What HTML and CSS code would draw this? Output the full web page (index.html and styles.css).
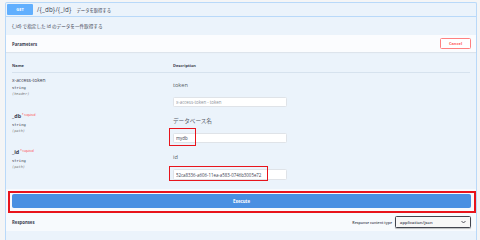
FILE: index.html
```html
<!DOCTYPE html>
<html lang="ja">
<head>
    <meta charset="UTF-8">
    <title>GET /{_db}/{_id}</title>
    <link rel="stylesheet" href="styles.css">
</head>
<body>
    <div class="opblock">
        <div class="opblock-summary">
            <span class="method">GET</span>
            <span class="path">/{_db}/{_id}</span>
            <span class="summary">データを取得する</span>
        </div>

        <div class="opblock-description">{_id} で指定した id のデータを一件取得する</div>

        <div class="section-header">
            <span class="section-title">Parameters</span>
            <button class="btn-cancel">Cancel</button>
        </div>

        <div class="params">
            <div class="param-row param-head">
                <div class="col-name">Name</div>
                <div class="col-desc">Description</div>
            </div>

            <div class="param-row">
                <div class="col-name">
                    <div class="param-name">x-access-token</div>
                    <div class="param-type">string</div>
                    <div class="param-in">(header)</div>
                </div>
                <div class="col-desc">
                    <div class="param-label">token</div>
                    <div class="field">
                        <input class="param-input" type="text" placeholder="x-access-token - token">
                    </div>
                </div>
            </div>

            <div class="param-row">
                <div class="col-name">
                    <div class="param-name is-required">_db<span class="required">* required</span></div>
                    <div class="param-type">string</div>
                    <div class="param-in">(path)</div>
                </div>
                <div class="col-desc">
                    <div class="param-label">データベース名</div>
                    <div class="field">
                        <input class="param-input" type="text" value="mydb">
                        <span class="mark mark-db"></span>
                    </div>
                </div>
            </div>

            <div class="param-row param-last">
                <div class="col-name">
                    <div class="param-name is-required">_id<span class="required">* required</span></div>
                    <div class="param-type">string</div>
                    <div class="param-in">(path)</div>
                </div>
                <div class="col-desc">
                    <div class="param-label">id</div>
                    <div class="field">
                        <input class="param-input" type="text" value="52ca8336-a606-11ea-a583-0746b3005e72">
                        <span class="mark mark-id"></span>
                    </div>
                </div>
            </div>
        </div>

        <div class="execute-wrapper">
            <div class="execute-mark">
                <button class="btn-execute">Execute</button>
            </div>
        </div>

        <div class="section-header responses-header">
            <span class="section-title">Responses</span>
            <div class="content-type">
                <span class="content-type-label">Response content type</span>
                <div class="select">
                    <span>application/json</span>
                    <svg width="5" height="4" viewBox="0 0 10 6"><path d="M1 1l4 4 4-4" fill="none" stroke="#41444e" stroke-width="1.8"/></svg>
                </div>
            </div>
        </div>
    </div>
</body>
</html>
```

FILE: styles.css
```css
* {
    margin: 0;
    padding: 0;
    box-sizing: border-box;
}

body {
    font-family: 'Open Sans', 'Noto Sans CJK JP', sans-serif;
    background-color: #f4f5f6;
    color: #3b4151;
    padding: 2px 3px 0 5px;
    height: 240px;
    overflow: hidden;
}

.opblock {
    background-color: #ebf3fb;
    border: 1px solid #b9d9f9;
    border-bottom: none;
    border-radius: 2px 2px 0 0;
    height: 238px;
}

.opblock-summary {
    display: flex;
    align-items: center;
    height: 14px;
    padding: 0 1px;
    border-bottom: 1px solid #b9d9f9;
}

.method {
    width: 26px;
    height: 11px;
    line-height: 11px;
    background-color: #61affe;
    color: #fff;
    font-size: 4px;
    font-weight: 700;
    text-align: center;
    border-radius: 1px;
}

.path {
    margin-left: 4px;
    font-size: 6.2px;
    font-weight: 500;
    letter-spacing: 0.2px;
    color: #3b4151;
}

.summary {
    margin-left: 5px;
    font-size: 4.3px;
    color: #3b4151;
}

.opblock-description {
    height: 18px;
    line-height: 18px;
    padding-left: 6px;
    font-size: 4.6px;
}

.section-header {
    display: flex;
    align-items: center;
    justify-content: space-between;
    height: 17px;
    padding: 0 5px 0 6px;
    background-color: #fbfcfe;
    box-shadow: 0 1px 1px rgba(0, 0, 0, 0.06);
}

.section-title {
    font-size: 4.3px;
    font-weight: 700;
}

.btn-cancel {
    width: 31px;
    height: 11px;
    font-family: inherit;
    font-size: 4px;
    font-weight: 700;
    color: #ff6060;
    background: #fff;
    border: 1px solid #ff8080;
    border-radius: 1.5px;
}

.params {
    padding: 0 6px;
}

.param-row {
    display: grid;
    grid-template-columns: 161px 1fr;
    padding-bottom: 2px;
}

.param-head {
    padding-top: 10px;
    border-bottom: 1px solid #d6e2ee;
    font-size: 4px;
    font-weight: 700;
    line-height: 8px;
}

.param-row .col-name {
    padding-top: 3px;
}

.param-head .col-name,
.param-head .col-desc {
    padding-top: 0;
}

.param-name {
    font-size: 4.9px;
    line-height: 8px;
    font-weight: 400;
    color: #3b4151;
}

.param-name.is-required {
    font-size: 5.4px;
    font-weight: 700;
}

.required {
    position: relative;
    top: -2px;
    margin-left: 1px;
    font-size: 2.8px;
    font-weight: 400;
    color: #ff3030;
}

.param-type {
    font-family: 'DejaVu Sans Mono', monospace;
    font-size: 3.8px;
    font-weight: 400;
    line-height: 7px;
}

.param-in {
    font-family: 'DejaVu Sans Mono', monospace;
    font-size: 3.6px;
    font-style: italic;
    color: #808080;
    line-height: 6px;
}

.col-desc {
    padding-top: 8px;
}

.param-label {
    font-size: 5.6px;
    line-height: 8px;
    color: #555b66;
}

.field {
    position: relative;
    margin-top: 8px;
    width: 114px;
}

.param-input {
    display: block;
    width: 114px;
    height: 10px;
    padding: 0 2px;
    font-family: inherit;
    font-size: 4.4px;
    color: #3b4151;
    background: #fff;
    border: 1px solid #dfe3e8;
    border-radius: 1.5px;
    outline: none;
}

.param-input::placeholder {
    color: #8a8f99;
}

.param-last {
    padding-bottom: 9px;
}

.param-last .field {
    height: 11px;
}

.param-last .param-input {
    height: 11px;
}

.mark {
    position: absolute;
    border: 1.6px solid #e8141c;
}

.mark-db {
    left: -4px;
    top: -5px;
    width: 27px;
    height: 18px;
}

.mark-id {
    left: -4px;
    top: -3px;
    width: 99px;
    height: 15px;
}

.execute-wrapper {
    padding: 2px 0 0 2px;
    background-color: #f7fafd;
}

.execute-mark {
    width: 468px;
    padding: 1px 3px 3px 2px;
    border: 2px solid #e8141c;
}

.btn-execute {
    display: block;
    width: 459px;
    height: 14px;
    font-family: inherit;
    font-size: 4.3px;
    font-weight: 700;
    color: #fff;
    background-color: #4990e2;
    border: 1px solid #4990e2;
    border-radius: 1.5px;
}

.responses-header {
    height: 18px;
    box-shadow: none;
    background-color: #f7fafd;
}

.content-type {
    display: flex;
    align-items: center;
    gap: 3px;
}

.content-type-label {
    font-size: 3.6px;
    font-weight: 600;
}

.select {
    display: flex;
    align-items: center;
    justify-content: space-between;
    width: 76px;
    height: 12px;
    padding: 0 4px 0 4px;
    font-size: 4.2px;
    font-weight: 600;
    background: #f7f7f7;
    border: 1.5px solid #41444e;
    border-radius: 1.5px;
    box-shadow: 0 1px 1px rgba(0, 0, 0, 0.25);
}
```
